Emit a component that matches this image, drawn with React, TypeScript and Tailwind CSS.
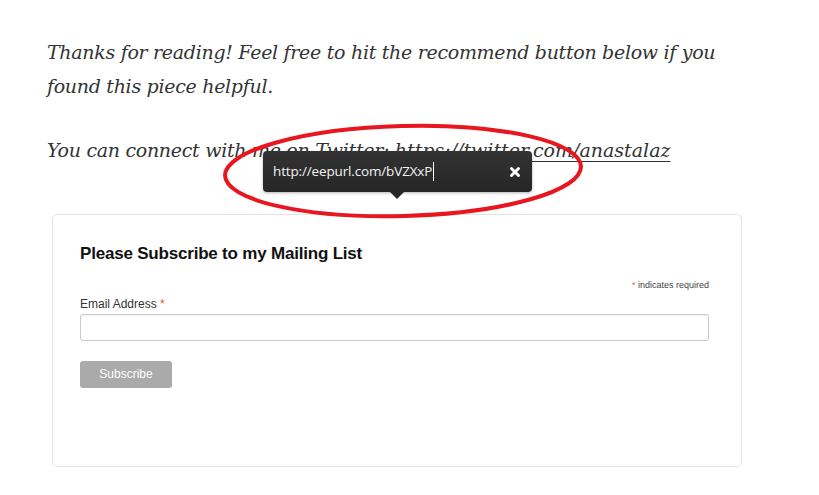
import { X } from "lucide-react";

function LinkPopover() {
  return (
    <div className="absolute left-[263px] top-[151px] w-[269px] h-[41px] rounded-[4px] bg-gradient-to-b from-[#333333] to-[#262626] flex items-center pl-[10px] pr-[10px] shadow-[0_1px_3px_rgba(0,0,0,0.3)]">
      <span className="text-[13.5px] text-[#f2f2f2] font-['Open_Sans',sans-serif] tracking-[-0.15px]">http://eepurl.com/bVZXxP</span>
      <span className="ml-[1px] w-px h-[19px] bg-white" />
      <div className="ml-auto text-white">
        <X className="size-[14px]" strokeWidth={5} />
      </div>
      <div className="absolute left-[127px] -bottom-[7px] w-0 h-0 border-l-[7px] border-r-[7px] border-t-[7px] border-l-transparent border-r-transparent border-t-[#262626]" />
    </div>
  );
}

export default function App() {
  return (
    <div className="relative w-[819px] h-[495px] bg-white overflow-hidden">
      <div className="pl-[47px] pt-[35px] font-['DejaVu_Serif',serif] italic text-[19px] leading-[34px] text-[#333333] tracking-[-0.3px]">
        <p>
          Thanks for reading! Feel free to hit the recommend button below if you
          <br />
          found this piece helpful.
        </p>
        <p className="mt-[30px]">
          You can connect with me on Twitter:{" "}
          <span className="underline underline-offset-[4px] decoration-1 tracking-[0px]">https://twitter.com/anastalaz</span>
        </p>
      </div>

      <div className="ml-[52px] mt-[47px] w-[690px] h-[253px] rounded-[5px] border border-[#e4e4e4] px-[27px] pt-[26px] font-['Liberation_Sans',Arial,sans-serif]">
        <h2 className="text-[17px] font-bold text-[#111111] tracking-[-0.2px]">Please Subscribe to my Mailing List</h2>
        <div className="mt-[12px] text-right pr-[5px] text-[9px] text-[#444444] leading-[12px]">
          <span className="text-[#e85c41]">*</span> indicates required
        </div>
        <label className="block mt-[6px] text-[12px] text-[#333333] leading-[14px]">
          Email Address <span className="text-[#e85c41]">*</span>
        </label>
        <div className="mt-[3px] mr-[5px] h-[27px] rounded-[3px] border border-[#c9c9c9] bg-white shadow-[inset_0_1px_1px_rgba(0,0,0,0.05)]" />
        <button className="mt-[20px] w-[92px] h-[27px] rounded-[3px] bg-[#aaaaaa] text-white text-[12px]">Subscribe</button>
      </div>

      <LinkPopover />

      <svg className="absolute left-0 top-0 pointer-events-none" width="819" height="495">
        <ellipse cx="403" cy="171" rx="178" ry="45" fill="none" stroke="#e8161e" strokeWidth="4" transform="rotate(-1.5 403 171)" />
      </svg>
    </div>
  );
}
